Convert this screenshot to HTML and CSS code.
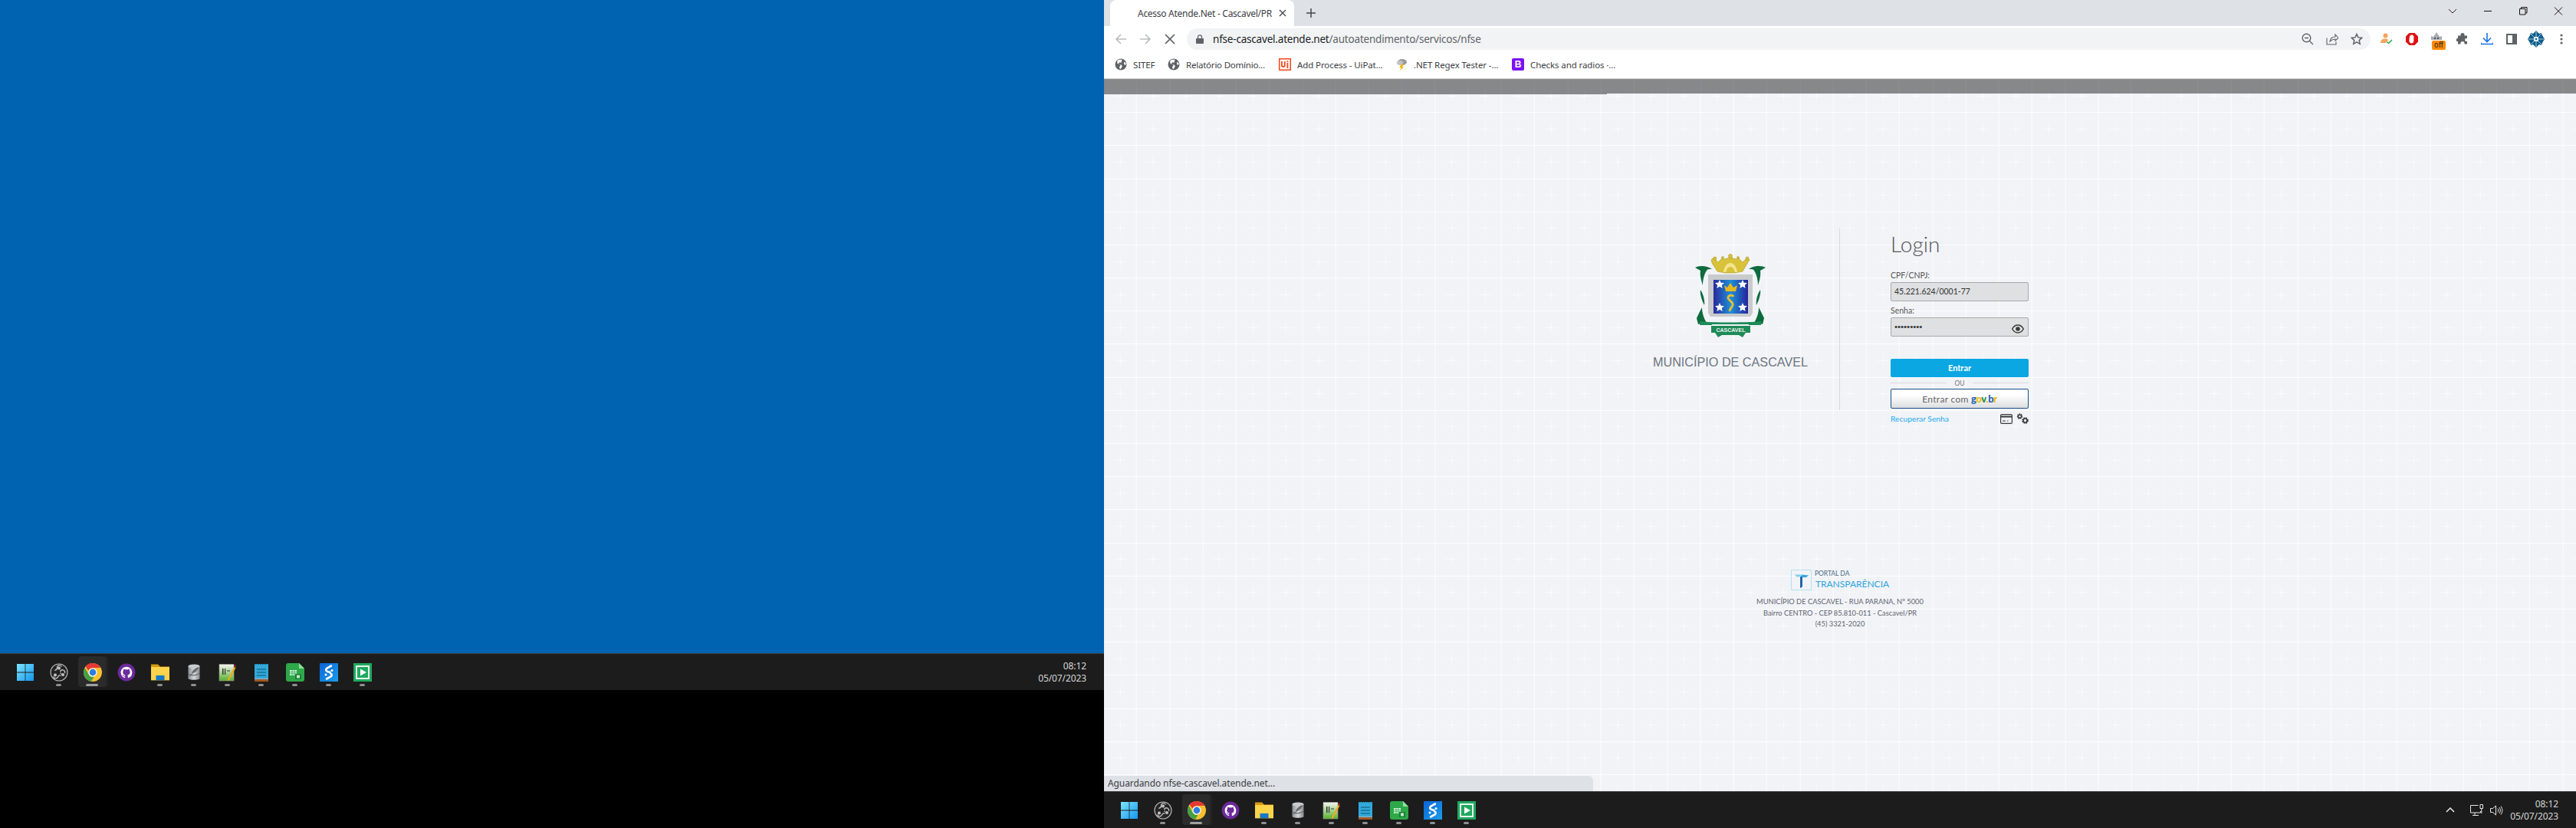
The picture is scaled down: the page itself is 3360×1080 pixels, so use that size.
FILE: index.html
```html
<!DOCTYPE html>
<html lang="pt-BR">
<head>
<meta charset="utf-8">
<title>Acesso Atende.Net - Cascavel/PR</title>
<link rel="stylesheet" href="styles.css">
</head>
<body>
<svg class="sprite" width="0" height="0" aria-hidden="true">
  <defs>
    <linearGradient id="gWin" x1="0" y1="0" x2="1" y2="1"><stop offset="0" stop-color="#7be6ff"/><stop offset="1" stop-color="#1496ee"/></linearGradient>
    <linearGradient id="gBlue" x1="0" y1="0" x2="1" y2="0"><stop offset="0" stop-color="#2a2a9a"/><stop offset=".5" stop-color="#1f8fd8"/><stop offset="1" stop-color="#24249a"/></linearGradient>
    <linearGradient id="gS" x1="0" y1="0" x2="1" y2="1"><stop offset="0" stop-color="#0b63d8"/><stop offset="1" stop-color="#1b9ee8"/></linearGradient>
    <linearGradient id="gDb" x1="0" y1="0" x2="1" y2="0"><stop offset="0" stop-color="#8a8d92"/><stop offset=".5" stop-color="#d5d7da"/><stop offset="1" stop-color="#888b90"/></linearGradient>
    <linearGradient id="gNpp" x1="0" y1="0" x2="0" y2="1"><stop offset="0" stop-color="#f5f5f0"/><stop offset="1" stop-color="#58b030"/></linearGradient>
    <symbol id="i-start" viewBox="0 0 24 24"><path fill="url(#gWin)" d="M1 1h10.6v10.6H1zM12.4 1H23v10.6H12.4zM1 12.4h10.6V23H1zM12.4 12.4H23V23H12.4z"/></symbol>
    <symbol id="i-obs" viewBox="0 0 24 24"><circle cx="12" cy="12" r="11" fill="#262626" stroke="#bdbdbd" stroke-width="1.100"/><g fill="none" stroke="#c4c4c4" stroke-width="1.300"><path d="M15.500 4.500a3.200 3.200 0 0 0-6 1.500c.2 1.700-1.700 3-3.200 3.400M4.500 17.500a3.200 3.200 0 0 0 6 .5c.5-1.800 2.500-2.500 4-2M19.500 13a3.200 3.200 0 0 0-5.500-3c-1 1.300-.5 3 .5 4"/></g><circle cx="12" cy="6.500" r="2" fill="#c4c4c4"/><circle cx="7" cy="15.500" r="2" fill="#c4c4c4"/><circle cx="17" cy="15" r="2" fill="#c4c4c4"/><circle cx="12" cy="12" r="1.800" fill="#1c1c1c"/></symbol>
    <symbol id="i-chrome" viewBox="0 0 24 24"><circle cx="12" cy="12" r="12" fill="#fbc02d"/><path fill="#e53935" d="M12 0a12 12 0 0 1 10.4 6H12a6 6 0 0 0-5.6 3.8L2.4 4.2A12 12 0 0 1 12 0z"/><path fill="#43a047" d="M1.6 6 6.8 15a6 6 0 0 0 6.6 2.9L10.1 23.8A12 12 0 0 1 1.6 6z"/><circle cx="12" cy="12" r="5.6" fill="#fff"/><circle cx="12" cy="12" r="4.4" fill="#2f7de1"/></symbol>
    <symbol id="i-gh" viewBox="0 0 24 24"><circle cx="12" cy="12" r="11.4" fill="#6c2a9c"/><g transform="translate(4.6 4.8) scale(.92)"><path fill="#fff" d="M8 0C3.58 0 0 3.58 0 8c0 3.54 2.29 6.53 5.47 7.59.4.07.55-.17.55-.38 0-.19-.01-.82-.01-1.49-2.01.37-2.53-.49-2.69-.94-.09-.23-.48-.94-.82-1.13-.28-.15-.68-.52-.01-.53.63-.01 1.08.58 1.23.82.72 1.21 1.87.87 2.33.66.07-.52.28-.87.51-1.07-1.78-.2-3.64-.89-3.64-3.95 0-.87.31-1.59.82-2.15-.08-.2-.36-1.02.08-2.12 0 0 .67-.21 2.2.82.64-.18 1.32-.27 2-.27.68 0 1.36.09 2 .27 1.53-1.04 2.2-.82 2.2-.82.44 1.1.16 1.92.08 2.12.51.56.82 1.27.82 2.15 0 3.07-1.87 3.75-3.65 3.95.29.25.54.73.54 1.48 0 1.07-.01 1.93-.01 2.2 0 .21.15.46.55.38A8.013 8.013 0 0016 8c0-4.42-3.58-8-8-8z"/></g></symbol>
    <symbol id="i-folder" viewBox="0 0 24 24"><path fill="#d69a10" d="M0 1.500h9l3 3h12v6H0z"/><path fill="#fbd44c" d="M0 5h24v17.500H0z"/><path fill="#1478c8" d="M6.500 16h11v6.500h-11z"/><path fill="#5d4410" d="M0 22h24v.5H0z"/></symbol>
    <symbol id="i-db" viewBox="0 0 24 24"><path fill="url(#gDb)" d="M4.500 4c0-2.400 15-2.400 15 0v16c0 2.400-15 2.400-15 0z"/><ellipse cx="12" cy="4" rx="7.500" ry="2.400" fill="#c9cbce"/><path fill="none" stroke="#55585c" stroke-width="1" d="M4.500 14c4 3 11 2 15-1M6 17 18 6"/><path fill="#6a6d72" d="M9 13c1-4 5-7 9-8-1 4-4 8-9 8z"/></symbol>
    <symbol id="i-npp" viewBox="0 0 24 24"><path fill="url(#gNpp)" stroke="#9a9a92" stroke-width=".6" d="M1 1.500h19V23H1z"/><path fill="#333" d="M5 7h1.500v8H5zM8 7h1.200v8H8zM11 9.500h4v1h-4z"/><path fill="#f0a820" d="M12 21 20.500 5l2 1-8.500 16-2.400 1.200z"/><path fill="#b02020" d="M21 2.500l2 .8-.7 2.700-2-1z"/></symbol>
    <symbol id="i-note" viewBox="0 0 24 24"><path fill="#33a9d9" d="M3 1h18v19H3z"/><path fill="#1c7fa8" d="M6 7h12v2H6zM6 11h12v2H6zM6 15h12v2H6z"/><path fill="#a6b2b8" d="M3 20h18v1.500H3z"/><path fill="#a6561e" d="M3 21.500h18V24H3z"/><path stroke="#0d6183" stroke-dasharray="1.500 1.500" d="M4 1.500h16"/></symbol>
    <symbol id="i-calc" viewBox="0 0 24 24"><path fill="#2fa84a" d="M3 0h14l7 7v14a3 3 0 0 1-3 3H3a3 3 0 0 1-3-3V3a3 3 0 0 1 3-3z"/><path fill="#8fe0a0" d="M17 0l7 7h-7z"/><path fill="#d8f4df" d="M5 9h9v7H5z"/><path stroke="#2fa84a" stroke-width=".8" d="M5 11.500h9M5 13.800h9M8 9v7M11 9v7"/><path fill="#1d7d35" d="M12 14h8v7h-8z"/><path fill="#bdeccb" d="M14 15.500h4v4h-4z"/></symbol>
    <symbol id="i-s" viewBox="0 0 24 24"><path fill="url(#gS)" d="M0 0h24v24H0z"/><path fill="none" stroke="#fff" stroke-width="2.600" stroke-linecap="round" d="M15 3.500 9.500 6.500c-2 1.300-1.600 3.500.3 4.200l3.800 1.200M9 20.500l5.500-3c1.900-1.300 1.500-3.200-.2-3.900"/><circle cx="16" cy="9.500" r="1.500" fill="#fff"/><circle cx="8" cy="15" r="1.500" fill="#fff"/></symbol>
    <symbol id="i-play" viewBox="0 0 24 24"><path fill="#1fa85f" d="M0 0h24v24H0z"/><path fill="#e8f7ee" d="M3 3h18v18H3z"/><path fill="#1fa85f" d="M5 5h14v14H5z"/><path fill="#fff" d="M9 7.500 17 12l-8 4.500z"/></symbol>
    <symbol id="i-globe" viewBox="0 0 16 16"><circle cx="8" cy="8" r="7.500" fill="#5f6368"/><path fill="#fff" d="M5 1.800 3 4l.6 3 3 .8.800 1.700-1.400 2 1 3 1.800-2 1-2.200-1-1.600-2.600-.6L5 6.500l1.500-1.200 2.200.5.300-3 1-1zM12 5l2 .5.800 2-1.300 1.500-1.500-1.500z"/></symbol>
  </defs>
</svg>

<main class="desktop">
  <section class="screen screen-left">
    <div class="wallpaper"></div>
    <footer class="taskbar">
      <div class="task-icons">
        <span class="task"><svg class="task-svg"><use href="#i-start"/></svg></span>
        <span class="task open"><svg class="task-svg"><use href="#i-obs"/></svg></span>
        <span class="task active"><svg class="task-svg"><use href="#i-chrome"/></svg></span>
        <span class="task"><svg class="task-svg"><use href="#i-gh"/></svg></span>
        <span class="task open"><svg class="task-svg"><use href="#i-folder"/></svg></span>
        <span class="task open"><svg class="task-svg"><use href="#i-db"/></svg></span>
        <span class="task open"><svg class="task-svg"><use href="#i-npp"/></svg></span>
        <span class="task open"><svg class="task-svg"><use href="#i-note"/></svg></span>
        <span class="task open"><svg class="task-svg"><use href="#i-calc"/></svg></span>
        <span class="task open"><svg class="task-svg"><use href="#i-s"/></svg></span>
        <span class="task open"><svg class="task-svg"><use href="#i-play"/></svg></span>
      </div>
      <div class="clock"><span>08:12</span><span>05/07/2023</span></div>
    </footer>
    <div class="below"></div>
  </section>

  <section class="screen screen-right">
    <div class="browser">
      <header class="tabstrip">
        <div class="tab">
          <span class="tab-title">Acesso Atende.Net - Cascavel/PR</span>
          <svg class="tab-close" viewBox="0 0 10 10" width="10" height="10"><path d="M1 1l8 8M9 1 1 9" stroke="#45484c" stroke-width="1.400" fill="none"/></svg>
        </div>
        <svg class="newtab" viewBox="0 0 12 12" width="12" height="12"><path d="M6 0v12M0 6h12" stroke="#45484c" stroke-width="1.500"/></svg>
        <div class="win-controls">
          <svg class="win-btn" viewBox="0 0 46 28" width="46" height="28"><path d="M18 12l5 5 5-5" stroke="#222" fill="none"/></svg>
          <svg class="win-btn" viewBox="0 0 46 28" width="46" height="28"><path d="M18 14.500h10" stroke="#111"/></svg>
          <svg class="win-btn" viewBox="0 0 46 28" width="46" height="28"><path d="M18.500 11.500h7.500v7.500h-7.500zM20.500 11V9.500h7.500V17h-1.500" stroke="#111" fill="none"/></svg>
          <svg class="win-btn" viewBox="0 0 46 28" width="46" height="28"><path d="M18 9.500l10 10M28 9.500l-10 10" stroke="#111" fill="none"/></svg>
        </div>
      </header>

      <div class="toolbar">
        <svg class="nav" viewBox="0 0 16 16" width="16" height="16"><path d="M15 8H2M8 2 2 8l6 6" stroke="#b9bcc0" stroke-width="1.600" fill="none"/></svg>
        <svg class="nav" viewBox="0 0 16 16" width="16" height="16"><path d="M1 8h13M8 2l6 6-6 6" stroke="#b9bcc0" stroke-width="1.600" fill="none"/></svg>
        <svg class="nav" viewBox="0 0 16 16" width="16" height="16"><path d="M2 2l12 12M14 2 2 14" stroke="#5f6368" stroke-width="1.700" fill="none"/></svg>
        <div class="omnibox">
          <svg class="lock" viewBox="0 0 10 12" width="10" height="12"><path fill="#5f6368" d="M1 5h8a1 1 0 0 1 1 1v5a1 1 0 0 1-1 1H1a1 1 0 0 1-1-1V6a1 1 0 0 1 1-1z"/><path fill="none" stroke="#5f6368" stroke-width="1.300" d="M2.500 5V3.300a2.500 2.500 0 0 1 5 0V5"/></svg>
          <span class="url"><span class="url-host">nfse-cascavel.atende.net</span>/autoatendimento/servicos/nfse</span>
          <span class="omni-icons">
            <svg viewBox="0 0 16 16" width="16" height="16"><circle cx="6.500" cy="6.500" r="5.300" fill="none" stroke="#5f6368" stroke-width="1.400"/><path d="M10.500 10.500 15 15M4 6.500h5" stroke="#5f6368" stroke-width="1.400"/></svg>
            <svg viewBox="0 0 16 16" width="16" height="16"><path d="M1 6.500V15h12v-3.500M5 11c.5-4 3.500-6 7-6V2l4 4.500L12 10V8c-3 0-5 1-7 3z" fill="none" stroke="#5f6368" stroke-width="1.100"/></svg>
            <svg viewBox="0 0 16 16" width="16" height="16"><path d="M8 1.500l2 4.400 4.800.5-3.600 3.200 1 4.700L8 11.900l-4.200 2.400 1-4.700-3.600-3.200 4.800-.5z" fill="none" stroke="#5f6368" stroke-width="1.500"/></svg>
          </span>
        </div>
        <div class="extensions">
          <svg class="ext" viewBox="0 0 16 16" width="16" height="16"><circle cx="6.500" cy="3.500" r="3" fill="#f7a35c"/><path fill="#f7a35c" d="M0 13c0-3.500 2.500-5.500 6-5.500 2 0 3 .5 4 1.500l-3 4z"/><path d="M8.500 11.500l2 2 4.500-4.500" stroke="#2aa84f" stroke-width="1.500" fill="none"/></svg>
          <svg class="ext" viewBox="0 0 18 18" width="18" height="18"><path fill="#e01010" d="M5.500 1h7L17 5.500v7L12.500 17h-7L1 12.500v-7z"/><path fill="#fff" d="M6 5c0-1 1.300-1 1.300 0V4c0-1 1.300-1 1.300 0v0c0-1 1.400-1 1.400 0v1c0-1 1.400-1 1.400 0v5.500c0 2.500-1 4-3 4s-3-1.500-3-4z"/></svg>
          <span class="ext ext-off">
            <svg viewBox="0 0 16 14" width="16" height="14"><path fill="#a9adb2" d="M1 10V5l3 1 2-3 2-3 2 3 2 3 3-1v5z"/><circle cx="6" cy="8" r="1" fill="#333"/><circle cx="10" cy="8" r="1" fill="#333"/></svg>
            <span class="badge-off">off</span>
          </span>
          <svg class="ext" viewBox="0 0 16 16" width="16" height="16"><path fill="#5f6368" d="M5.500 2.500a2.500 2.500 0 0 1 5 0V3.500H14v3.500h-1a2 2 0 0 0 0 4h1v3.500H10.500v-1a2.500 2.500 0 0 0-5 0v1H2v-3.500h-.5a2 2 0 0 1 0-4H2V3.500h3.500z"/></svg>
          <svg class="ext" viewBox="0 0 16 16" width="16" height="16"><path d="M8 0v10.500M3 6.500l5 5 5-5M0 12.500v2h16v-2" stroke="#1a73e8" stroke-width="1.600" fill="none"/></svg>
          <svg class="ext" viewBox="0 0 14 14" width="14" height="14"><path fill="#5f6368" d="M0 0h14v14H0z"/><path fill="#fff" d="M2 2h6v10H2z"/></svg>
          <svg class="ext" viewBox="0 0 22 22" width="22" height="22"><path fill="#0f5f8c" d="M11 0l4 4 3-1 1 3 3 5-3 5-1 3-3-1-4 4-4-4-3 1-1-3-3-5 3-5 1-3 3 1z"/><path d="M11 1v20M1 11h20M4 4l14 14M18 4 4 18" stroke="#d8eaf4" stroke-width=".8"/><path fill="#d8eaf4" d="M8 8h6v6H8z"/><path fill="#0f5f8c" d="M10 10h2v2h-2z"/></svg>
          <svg class="ext" viewBox="0 0 4 14" width="4" height="14"><circle cx="2" cy="2" r="1.600" fill="#5f6368"/><circle cx="2" cy="7" r="1.600" fill="#5f6368"/><circle cx="2" cy="12" r="1.600" fill="#5f6368"/></svg>
        </div>
      </div>

      <nav class="bookmarks">
        <a class="bm bm-1"><svg class="bm-ico"><use href="#i-globe"/></svg>SITEF</a>
        <a class="bm bm-2"><svg class="bm-ico"><use href="#i-globe"/></svg>Relatório Domínio...</a>
        <a class="bm bm-3"><svg class="bm-ico" viewBox="0 0 16 16"><path fill="#fa4616" d="M0 0h16v16H0z"/><path fill="#fff" d="M1.500 1.500h13v13h-13z"/><path fill="#fa4616" d="M3 4h1.800v5.500c0 1 2 1 2 0V4h1.800v5.700c0 3-5.600 3-5.600 0zM10.500 6h1.800v7h-1.800zM10.500 3.300h1.800V5h-1.800z"/></svg>Add Process - UiPat...</a>
        <a class="bm bm-4"><svg class="bm-ico" viewBox="0 0 16 16"><ellipse cx="9" cy="5" rx="6" ry="4" fill="#9a9a9a"/><ellipse cx="6" cy="6" rx="4" ry="3" fill="#c2c2c2"/><path fill="#f4b400" d="M8 8h3l-2 3h2l-5 5 1.500-4H5z"/></svg>.NET Regex Tester -...</a>
        <a class="bm bm-5"><svg class="bm-ico" viewBox="0 0 16 16"><rect width="16" height="16" rx="2" fill="#7b12f5"/><text x="8" y="12" class="bm-b">B</text></svg>Checks and radios ·...</a>
      </nav>

      <div class="page">
        <div class="page-dim"><div class="page-dim-step"></div></div>
        <div class="login">
          <div class="brand">
            <svg class="crest" viewBox="0 0 92 112" width="92" height="112">
              <g fill="#d8c23a" stroke="#a08c18" stroke-width=".5">
                <path d="M21 8l3-3 3 3 3 3 5-5 3 1 8-2 8 2 3-1 5 5 3-3 3-3 3 3-2 3-7 12-10 2H39l-10-2-7-11z"/>
                <circle cx="26" cy="6" r="2"/><circle cx="46" cy="3" r="2.500"/><circle cx="68" cy="6" r="2"/><circle cx="36" cy="5" r="1.500"/><circle cx="56" cy="5" r="1.500"/>
              </g>
              <path d="M37 24c1-8 5-12 9-12s8 4 9 12h-3c-1-4-3-7-6-7s-5 3-6 7z" fill="#f2e58c"/>
              <g fill="#0e6b3d">
                <path d="M0 18c5-3 15-3 22 2-4 0-6 0-7 2-3 4-5 12-5 19-2-6-4-13-3-19z"/>
                <path d="M92 18c-5-3-15-3-22 2 4 0 6 0 7 2 3 4 5 12 5 19 2-6 4-13 3-19z"/>
                <path d="M7 47c4 6 6 14 5 20-3-6-6-14-5-20zM85 47c-4 6-6 14-5 20 3-6 6-14 5-20z"/>
                <path d="M9 70c-3 5-5 10-7 14l2 8c4-2 8-2 11-2-3-5-6-12-6-20zM83 70c3 5 5 10 7 14l-2 8c-4-2-8-2-11-2 3-5 6-12 6-20z"/>
              </g>
              <path fill="#c8cacc" d="M17 27h58v50l-3 5H20l-3-5z"/>
              <path fill="url(#gBlue)" d="M24 34h45v44H24z"/>
              <g fill="#fff">
                <path d="M32 34l1.700 3.700 4.300.4-3.200 2.800.9 4.100-3.700-2.200-3.700 2.200.9-4.100-3.200-2.800 4.300-.4z"/>
                <path d="M62 34l1.700 3.700 4.300.4-3.200 2.800.9 4.100-3.700-2.200-3.700 2.200.9-4.100-3.200-2.800 4.300-.4zM32 64l1.700 3.700 4.300.4-3.200 2.800.9 4.100-3.700-2.200-3.700 2.200.9-4.100-3.200-2.800 4.300-.4zM62 64l1.700 3.700 4.300.4-3.200 2.800.9 4.100-3.700-2.200-3.700 2.200.9-4.100-3.200-2.800 4.300-.4z"/>
              </g>
              <path fill="#e8b820" d="M38 41l4 3 4-6 4 6 5-3-2 8H40z"/>
              <path fill="none" stroke="#e8c030" stroke-width="2.800" d="M50 56c-1-3-8-2-7 2 1 4 7 4 6 9-1 4-4 4-4 8"/>
              <g fill="#1e8a58">
                <path d="M6 88c14 2 66 2 80 0v5H70v-1H22v1H6z"/>
                <path d="M21 94h51v9H66l-4 6-5-3H35l-5 3-4-6h-5z"/>
              </g>
              <text x="46.500" y="101.500" class="crest-text">CASCAVEL</text>
            </svg>
            <p class="brand-name">MUNICÍPIO DE CASCAVEL</p>
          </div>
          <form class="login-form">
            <h1 class="login-title">Login</h1>
            <label class="field-label">CPF/CNPJ:</label>
            <div class="input"><span>45.221.624/0001-77</span></div>
            <label class="field-label field-label-2">Senha:</label>
            <div class="input input-pass"><span class="dots">•••••••••</span>
              <svg class="eye" viewBox="0 0 16 12" width="16" height="12"><path d="M.7 6C2.500 2.700 5 1 8 1s5.500 1.700 7.300 5C13.500 9.300 11 11 8 11S2.500 9.300.7 6z" fill="none" stroke="#3a3a3a" stroke-width="1.500"/><circle cx="8" cy="6" r="2.800" fill="#3a3a3a"/></svg>
            </div>
            <div class="btn-enter">Entrar</div>
            <div class="or"><span>OU</span></div>
            <div class="btn-gov">Entrar com <b class="gov"><i class="c-b">g</i><i class="c-y">o</i><i class="c-g">v</i><i class="c-y">.</i><i class="c-b">b</i><i class="c-y">r</i></b></div>
            <div class="form-links">
              <a class="recover">Recuperar Senha</a>
              <svg class="card" viewBox="0 0 16 13" width="16" height="13"><rect x=".6" y=".6" width="14.800" height="11.800" rx="1.500" fill="none" stroke="#3a3a3a" stroke-width="1.200"/><path d="M1 3.500h14" stroke="#3a3a3a" stroke-width="2"/><path d="M3 9h4M9 9h1.500" stroke="#3a3a3a"/></svg>
              <svg class="gears" viewBox="0 0 16 14" width="16" height="14"><circle cx="4.500" cy="4" r="2.800" fill="none" stroke="#3a3a3a" stroke-width="1.800" stroke-dasharray="1.600 .8"/><circle cx="4.500" cy="4" r="1.900" fill="none" stroke="#3a3a3a" stroke-width="1.200"/><circle cx="11.500" cy="9.500" r="3.400" fill="none" stroke="#3a3a3a" stroke-width="1.800" stroke-dasharray="1.800 .9"/><circle cx="11.500" cy="9.500" r="2.400" fill="none" stroke="#3a3a3a" stroke-width="1.400"/></svg>
            </div>
          </form>
        </div>
        <div class="site-footer">
          <div class="transp">
            <span class="transp-box"><svg viewBox="0 0 27 27" width="25" height="25"><path fill="#7fcdf0" d="M4 6h10l-1 3H7z"/><path fill="#35a8e0" d="M14 6l10 1-4 3-6-.5z"/><path fill="#0f5aa8" d="M12 9l3-.5V23l-3 2z"/></svg></span>
            <span class="transp-text"><span class="transp-small">PORTAL DA</span><span class="transp-big">TRANSPARÊNCIA</span></span>
          </div>
          <p class="addr">MUNICÍPIO DE CASCAVEL - RUA PARANA, Nº 5000</p>
          <p class="addr">Bairro CENTRO - CEP 85.810-011 - Cascavel/PR</p>
          <p class="addr">(45) 3321-2020</p>
        </div>
        <div class="status-bubble">Aguardando nfse-cascavel.atende.net...</div>
      </div>
    </div>
    <footer class="taskbar">
      <div class="task-icons">
        <span class="task"><svg class="task-svg"><use href="#i-start"/></svg></span>
        <span class="task open"><svg class="task-svg"><use href="#i-obs"/></svg></span>
        <span class="task active"><svg class="task-svg"><use href="#i-chrome"/></svg></span>
        <span class="task"><svg class="task-svg"><use href="#i-gh"/></svg></span>
        <span class="task open"><svg class="task-svg"><use href="#i-folder"/></svg></span>
        <span class="task open"><svg class="task-svg"><use href="#i-db"/></svg></span>
        <span class="task open"><svg class="task-svg"><use href="#i-npp"/></svg></span>
        <span class="task open"><svg class="task-svg"><use href="#i-note"/></svg></span>
        <span class="task open"><svg class="task-svg"><use href="#i-calc"/></svg></span>
        <span class="task open"><svg class="task-svg"><use href="#i-s"/></svg></span>
        <span class="task open"><svg class="task-svg"><use href="#i-play"/></svg></span>
      </div>
      <div class="tray">
        <svg viewBox="0 0 12 7" width="12" height="7"><path d="M1 6l5-5 5 5" stroke="#e8e8e8" stroke-width="1.500" fill="none"/></svg>
        <svg class="tray-net" viewBox="0 0 18 16" width="18" height="16"><path d="M.5 1.500h10M.5 1.500v9.500h13V9M6 11v3M3 14.500h8M13 .500h3.500v5H13zM14.800 5.500V12" stroke="#e8e8e8" fill="none"/></svg>
        <svg class="tray-vol" viewBox="0 0 17 14" width="17" height="14"><path d="M.5 4.500h3l4-3.500v12l-4-3.500h-3zM10 4.500c1 1.500 1 3.500 0 5M12 3c1.800 2.500 1.800 5.500 0 8M14 1.500c2.500 3.500 2.500 7.500 0 11" stroke="#e8e8e8" fill="none"/></svg>
      </div>
      <div class="clock"><span>08:12</span><span>05/07/2023</span></div>
    </footer>
  </section>
</main>
</body>
</html>
```
FILE: styles.css
```css
* { box-sizing: border-box; }
html, body { margin: 0; padding: 0; background: #000; overflow: hidden; }
body { font-family: "Noto Sans", "Open Sans", sans-serif; }
.sprite { display: block; height: 0; width: 0; }
.desktop { display: flex; width: 3360px; height: 1080px; }
.screen { display: flex; flex-direction: column; height: 1080px; }
.screen-left { width: 1440px; }
.screen-right { width: 1920px; }
.wallpaper { height: 852px; background: #0063b1; }
.below { flex: 1; background: #000; }

/* taskbar */
.taskbar { height: 48px; flex: none; background: #1c1c1c; border-top: 1px solid #3a3a3a; display: flex; align-items: center; padding: 0 23px 0 11px; color: #dcdcdc; }
.task-icons { display: flex; flex: 1; height: 100%; }
.task { width: 44px; height: 47px; display: flex; align-items: center; justify-content: center; position: relative; }
.task-svg { width: 24px; height: 24px; display: block; margin-top: 0; }
.task.open::after, .task.active::after { content: ""; position: absolute; bottom: 5px; left: 18px; width: 7px; height: 3px; border-radius: 2px; background: #8f8f8f; }
.task.active { background: transparent; }
.task.active::before { content: ""; position: absolute; left: 3px; top: 3px; width: 36px; height: 40px; border-radius: 4px; background: #2b2b2b; box-shadow: 3px 0 0 #242424; }
.task.active .task-svg { position: relative; }
.task.active::after { left: 13px; width: 16px; background: #a0a0a0; }
.clock { display: flex; flex-direction: column; align-items: flex-end; font-size: 12px; line-height: 16px; color: #d6d6d6; letter-spacing: -.1px; }
.tray { display: flex; align-items: center; margin-right: 9px; }
.tray-net { margin-left: 20px; }
.tray-vol { margin-left: 8px; }

/* browser chrome */
.browser { height: 1032px; flex: none; display: flex; flex-direction: column; background: #fff; }
.tabstrip { height: 34px; flex: none; background: #dee1e6; display: flex; align-items: flex-start; padding-left: 8px; }
.tab { width: 240px; height: 34px; background: #fff; border-radius: 8px 8px 0 0; display: flex; align-items: center; padding-left: 36px; position: relative; }
.tab-title { font-size: 12px; color: #3c4043; width: 183px; white-space: nowrap; letter-spacing: -.28px; }
.tab-close { margin-left: 1px; }
.newtab { margin: 11px 0 0 16px; }
.win-controls { display: flex; margin-left: auto; }
.win-btn { display: block; margin-top: 0; }
.toolbar { height: 34px; flex: none; display: flex; align-items: center; padding-left: 14px; background: #fff; }
.toolbar .nav { margin-right: 16px; flex: none; }
.toolbar .nav:nth-child(3) { margin-right: 14px; }
.omnibox { width: 1544px; height: 28px; background: #f1f3f4; border-radius: 14px; display: flex; align-items: center; padding: 0 10px 0 12px; }
.lock { flex: none; }
.url { margin-left: 12px; font-size: 13.500px; color: #5f6368; white-space: nowrap; letter-spacing: -.2px; }
.url-host { color: #202124; }
.omni-icons { margin-left: auto; display: flex; gap: 16px; align-items: center; margin-right: 0; }
.extensions { display: flex; align-items: center; height: 34px; margin-left: 13px; }
.ext { display: block; flex: none; }
.extensions > :nth-child(2) { margin-left: 16px; }
.extensions > :nth-child(3) { margin-left: 15px; }
.extensions > :nth-child(4) { margin-left: 16px; }
.extensions > :nth-child(5) { margin-left: 16px; }
.extensions > :nth-child(6) { margin-left: 17px; }
.extensions > :nth-child(7) { margin-left: 14px; }
.extensions > :nth-child(8) { margin-left: 20px; }
.ext-off { position: relative; width: 18px; height: 24px; padding-top: 3px; }
.ext-off svg { display: block; }
.badge-off { position: absolute; left: 2px; bottom: -2px; width: 18px; height: 12px; background: #ff8a00; border-radius: 2px; font: 10px/12px "Liberation Sans", sans-serif; color: #222; text-align: center; letter-spacing: .3px; }
.bookmarks { height: 35px; flex: none; display: flex; align-items: center; padding: 0 0 2px 14px; border-bottom: 1px solid #d5d7da; background: #fff; }
.bm { display: flex; align-items: center; font-size: 11.500px; color: #3c4043; white-space: nowrap; letter-spacing: -.1px; }
.bm-2 { letter-spacing: -.22px; }
.bm-ico { width: 16px; height: 16px; display: block; margin-right: 8px; flex: none; }
.bm-1 { width: 69px; }
.bm-2 { width: 145px; }
.bm-3 { width: 152px; }
.bm-4 { width: 152px; }
.bm-b { font: bold 12px "Liberation Sans", sans-serif; fill: #fff; text-anchor: middle; }

/* page */
.page { flex: 1; position: relative; background-color: #f1f3f7; background-image: url("data:image/svg+xml,%3Csvg xmlns='http://www.w3.org/2000/svg' width='43.28' height='43.2'%3E%3Cdefs%3E%3ClinearGradient id='a'%3E%3Cstop offset='0' stop-color='%23fff' stop-opacity='0'/%3E%3Cstop offset='.5' stop-color='%23fff' stop-opacity='.7'/%3E%3Cstop offset='1' stop-color='%23fff' stop-opacity='0'/%3E%3C/linearGradient%3E%3ClinearGradient id='b' x2='0' y2='1'%3E%3Cstop offset='0' stop-color='%23fff' stop-opacity='0'/%3E%3Cstop offset='.5' stop-color='%23fff' stop-opacity='.7'/%3E%3Cstop offset='1' stop-color='%23fff' stop-opacity='0'/%3E%3C/linearGradient%3E%3C/defs%3E%3Crect x='42' width='1' height='43.2' fill='%23fff' opacity='.85'/%3E%3Crect y='0' width='43.28' height='1' fill='%23fff' opacity='.85'/%3E%3Crect x='8' y='21.500' width='26' height='1' fill='url(%23a)'/%3E%3Crect x='20.500' y='9' width='1' height='26' fill='url(%23b)'/%3E%3C/svg%3E"); background-size: 43.28px 43.2px; color: #666; font-family: "Lato", sans-serif; }
.page-dim { height: 19px; background: rgba(0,0,0,.44); }
.page-dim-step { position: relative; top: 19px; width: 656px; height: 1px; background: rgba(0,0,0,.44); }
.login { display: grid; grid-template-columns: 959px 1fr; grid-template-rows: 237px; margin-top: 176px; height: 237px; }
.brand { justify-self: end; width: 284px; display: flex; flex-direction: column; align-items: center; padding-top: 33px; }
.crest { display: block; }
.crest-text { font: bold 7px "Liberation Sans", sans-serif; fill: #e8f4ee; text-anchor: middle; }
.brand-name { margin: 19px 0 0; font: 16.200px/20px "Liberation Sans", sans-serif; color: #6d7580; white-space: nowrap; }
.login-form { border-left: 1px solid #d8dade; padding-left: 66px; width: 247px; height: 237px; display: flex; flex-direction: column; }
.login-form > * { flex: none; }
.login-title { margin: 3px 0 0; font-size: 28px; line-height: 34px; font-weight: 300; color: #555; }
.field-label { margin-top: 18px; font-size: 10.500px; line-height: 13px; color: #555; white-space: nowrap; }
.field-label-2 { margin-top: 6px; }
.input { height: 25px; margin-top: 2px; background: #dfe0e2; border: 1px solid #a9a9a9; border-radius: 2px; font-size: 10.500px; line-height: 23px; padding-left: 4px; color: #333; display: flex; align-items: center; justify-content: space-between; padding-right: 5px; }
.dots { font: 11.500px/23px "Liberation Sans", sans-serif; letter-spacing: 0; color: #333; }
.eye { display: block; margin-top: 4px; }
.btn-enter { margin-top: 29px; height: 24px; background: #0ba7e3; border-radius: 2px; color: #fff; font-size: 11px; font-weight: 700; line-height: 24px; text-align: center; }
.or { height: 15px; display: flex; align-items: center; gap: 10px; font-size: 8.500px; color: #777; }
.or::before, .or::after { content: ""; flex: 1; height: 1px; background: #d8dade; }
.btn-gov { height: 26px; border: 1px solid #1a4f8b; border-radius: 2px; background: linear-gradient(#fff 30%, #dcdee0); text-align: center; font-size: 12px; line-height: 24px; color: #666; letter-spacing: .3px; }
.gov { font-weight: 900; font-size: 13px; letter-spacing: -.4px; }
.gov i { font-style: normal; }
.c-b { color: #2864ae; }
.c-y { color: #f2b90f; }
.c-g { color: #168f48; }
.form-links { display: flex; align-items: center; height: 26px; }
.recover { font-size: 10.300px; color: #1eaaf0; white-space: nowrap; }
.card { margin-left: auto; display: block; }
.gears { margin-left: 5px; display: block; margin-right: 0; }
.site-footer { display: flex; flex-direction: column; align-items: center; margin-top: 208px; width: 100%; }
.transp { display: flex; align-items: center; height: 27px; gap: 4px; }
.transp-box { width: 27px; height: 27px; border: 1px solid #b5e0f0; display: flex; }
.transp-text { display: flex; flex-direction: column; }
.transp-small { font-size: 8.500px; line-height: 9px; color: #4a6a85; }
.transp-big { font-size: 12px; line-height: 17px; color: #2ea3dc; margin-left: 1px; }
.addr { margin: 0; font-size: 9.300px; line-height: 14.500px; color: #5f6570; white-space: nowrap; }
.site-footer .transp + .addr { margin-top: 8px; }
.status-bubble { position: absolute; left: 0; bottom: 0; width: 638px; height: 20px; background: #dee1e6; border-top-right-radius: 6px; font: 12px/20px "Noto Sans", sans-serif; color: #3c4043; padding-left: 5px; letter-spacing: -.1px; }
```
